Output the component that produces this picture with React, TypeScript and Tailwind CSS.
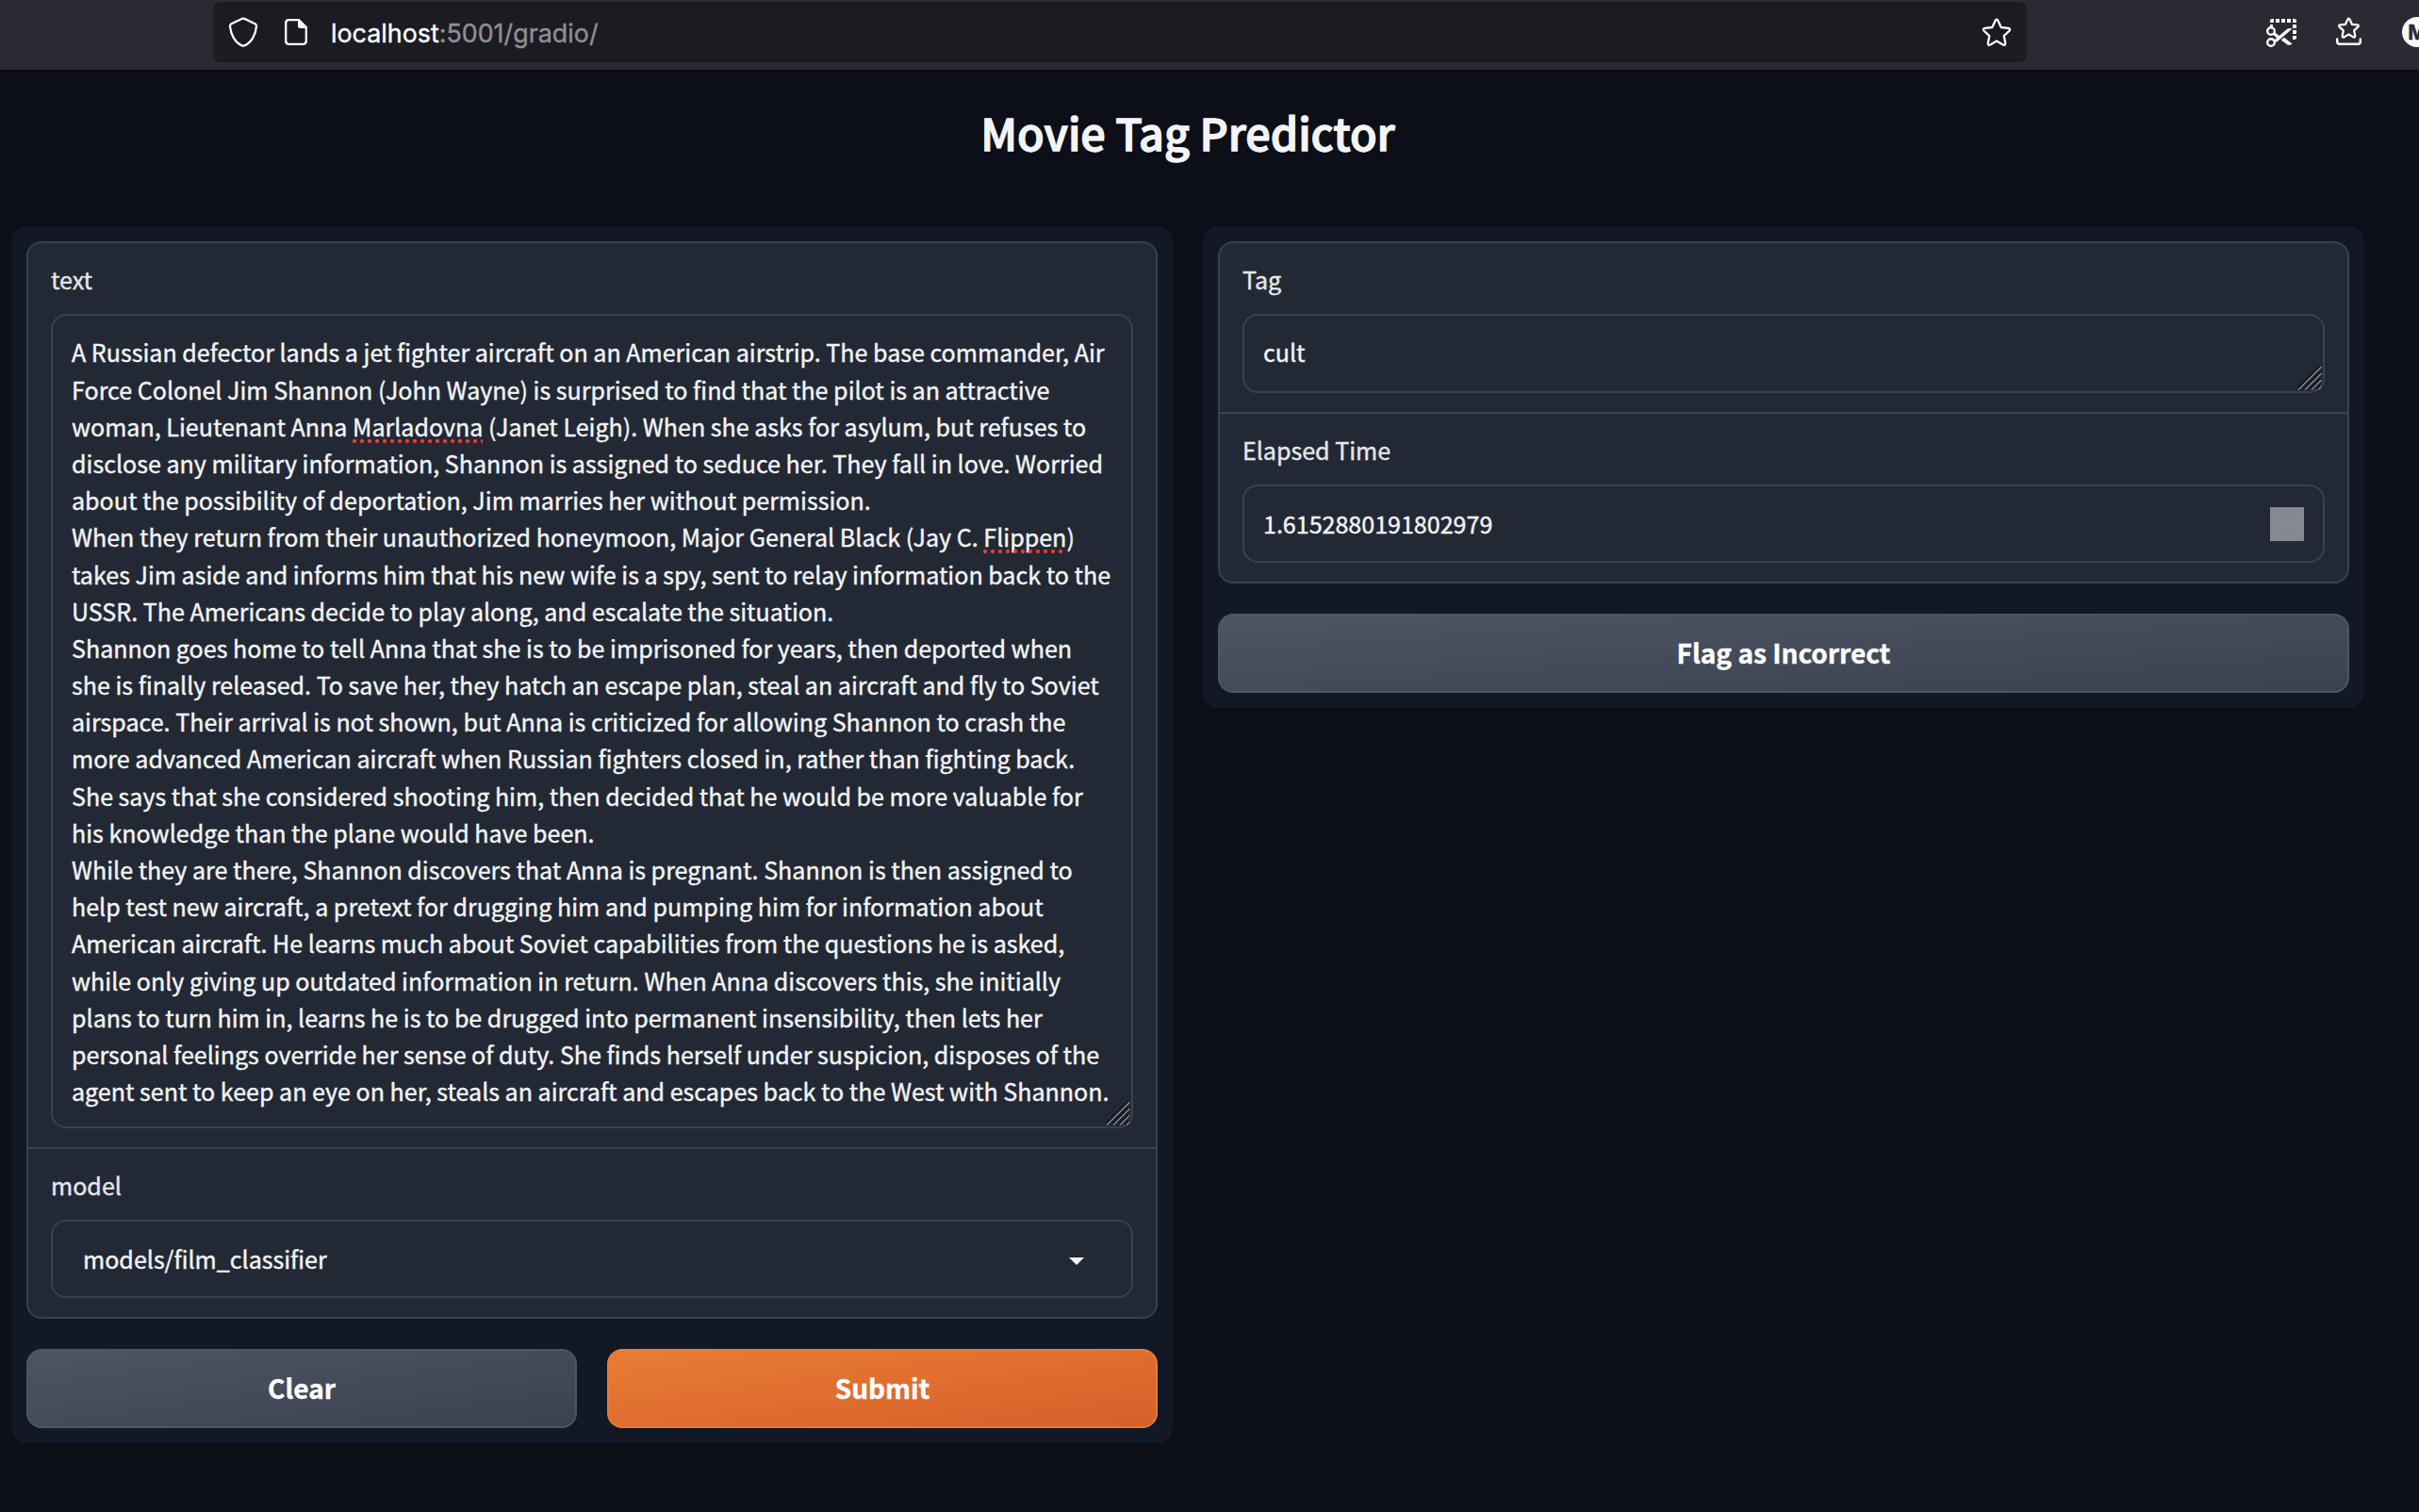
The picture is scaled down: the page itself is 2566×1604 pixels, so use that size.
import React from "react";

const lines: string[] = [
  "A Russian defector lands a jet fighter aircraft on an American airstrip. The base commander, Air",
  "Force Colonel Jim Shannon (John Wayne) is surprised to find that the pilot is an attractive",
  "woman, Lieutenant Anna *Marladovna* (Janet Leigh). When she asks for asylum, but refuses to",
  "disclose any military information, Shannon is assigned to seduce her. They fall in love. Worried",
  "about the possibility of deportation, Jim marries her without permission.",
  "When they return from their unauthorized honeymoon, Major General Black (Jay C. *Flippen*)",
  "takes Jim aside and informs him that his new wife is a spy, sent to relay information back to the",
  "USSR. The Americans decide to play along, and escalate the situation.",
  "Shannon goes home to tell Anna that she is to be imprisoned for years, then deported when",
  "she is finally released. To save her, they hatch an escape plan, steal an aircraft and fly to Soviet",
  "airspace. Their arrival is not shown, but Anna is criticized for allowing Shannon to crash the",
  "more advanced American aircraft when Russian fighters closed in, rather than fighting back.",
  "She says that she considered shooting him, then decided that he would be more valuable for",
  "his knowledge than the plane would have been.",
  "While they are there, Shannon discovers that Anna is pregnant. Shannon is then assigned to",
  "help test new aircraft, a pretext for drugging him and pumping him for information about",
  "American aircraft. He learns much about Soviet capabilities from the questions he is asked,",
  "while only giving up outdated information in return. When Anna discovers this, she initially",
  "plans to turn him in, learns he is to be drugged into permanent insensibility, then lets her",
  "personal feelings override her sense of duty. She finds herself under suspicion, disposes of the",
  "agent sent to keep an eye on her, steals an aircraft and escapes back to the West with Shannon.",
];

const STAR =
  "M14.4 4.2Q16 1.200 17.600 4.200L20.700 11L28.300 11.900Q31.300 12.400 29.300 14.800L23.700 20L25.200 27.500Q25.400 30.600 22.800 29.500L16 25.500L9.200 29.500Q6.600 30.600 6.800 27.500L8.300 20L2.700 14.800Q.7 12.400 3.700 11.900L11.300 11Z";

/* Dotted spell-check underline */
const Squiggle = () => (
  <span className="absolute right-0 bottom-0 left-0 h-1 bg-[radial-gradient(circle_at_2px_2px,#ee3a30_1.9px,transparent_2.3px)] bg-[length:8px_4px]" />
);

const Line = ({ text }: { text: string }) => (
  <div className="h-[39.2px] whitespace-nowrap">
    {text.split("*").map((part, i) =>
      i % 2 ? (
        <span key={i} className="relative">
          {part}
          <Squiggle />
        </span>
      ) : (
        part
      )
    )}
  </div>
);

const ResizeGrip = () => (
  <svg className="absolute right-px bottom-px" width="26" height="26" viewBox="0 0 26 26" fill="none">
    <path d="M0 24.5 24.5 0M7 24.5 24.5 7M14 24.5 24.5 14M21 24.5 24.5 21" stroke="#14181f" strokeWidth="3" />
    <path d="M1 25.5 25.5 1M8 25.5 25.5 8M15 25.5 25.5 15M22 25.5 25.5 22" stroke="#8d9096" strokeWidth="1.2" />
  </svg>
);

function Toolbar() {
  return (
    <header className="flex h-[76px] items-start border-b-2 border-[#0c0c0d] bg-[#2b2a33] pt-0.5 pl-[226px] text-[#fbfbfe]">
      <div className="flex h-16 w-[1924px] shrink-0 items-center rounded-lg bg-[#1c1b22]">
        <svg className="ml-4 shrink-0" width="32" height="32" viewBox="0 0 32 32" fill="none" stroke="currentColor" strokeWidth="2.3" strokeLinejoin="round">
          <path d="M14.6 1.900Q16 1.200 17.400 1.900L28.600 7.300Q30.200 8.200 30 10C29.300 18.500 24.500 27.500 17.200 30.400Q16 30.900 14.800 30.400C7.500 27.500 2.700 18.500 2 10Q1.800 8.200 3.400 7.300Z" />
        </svg>
        <svg className="ml-6 shrink-0" width="32" height="32" viewBox="0 0 32 32" fill="none">
          <path d="M19 3.200H8.500Q5.200 3.200 5.200 6.500V25.500Q5.200 28.800 8.500 28.800H23.500Q26.800 28.800 26.800 25.500V11.500" stroke="currentColor" strokeWidth="2.3" />
          <path d="M18 2H19.500L28 10.500V12H20.500Q18 12 18 9.500Z" fill="currentColor" />
        </svg>
        <span className="ml-[21px] pt-0.5 font-['Inter'] text-[26.85px] leading-none whitespace-nowrap [-webkit-text-stroke:0.4px]">
          localhost<span className="text-[#8f8e94]">:5001/gradio/</span>
        </span>
        <svg className="mr-4 ml-auto shrink-0" width="32" height="32" viewBox="0 0 32 32" fill="none" stroke="currentColor" strokeWidth="2.3" strokeLinejoin="round">
          <path d={STAR} />
        </svg>
      </div>
      <div className="ml-[254px] flex h-16 shrink-0 items-center gap-10">
        <svg className="shrink-0" width="32" height="32" viewBox="0 0 32 32" fill="none">
          <path
            d="M4 6V4Q4 2 6 2H8V6ZM10 2H14V6H10ZM16 2H20V6H16ZM22 2H26V6H22ZM28 2H30Q32 2 32 4V6H28ZM28 8H32V12H28ZM28 14H32V18H28ZM28 20H32V22Q32 24 30 24H28ZM4 8H7V10H4Z"
            fill="currentColor"
          />
          <circle cx="5" cy="15" r="3.800" stroke="currentColor" strokeWidth="2.4" />
          <circle cx="5" cy="27" r="3.800" stroke="currentColor" strokeWidth="2.4" />
          <path d="M8 24.800 22.500 12.600Q24 11.600 27.500 12.400L11.500 26.200 8.800 27Z" fill="currentColor" />
          <path d="M8 17.500 13 21.500" stroke="currentColor" strokeWidth="3.4" />
          <path d="M15.800 24.600 19 21.800 27.500 28.600Q25.500 30.400 22.500 29.600Z" fill="currentColor" />
        </svg>
        <svg className="shrink-0" width="32" height="32" viewBox="0 0 32 32" fill="none" stroke="currentColor" strokeLinejoin="round" strokeLinecap="round">
          <path transform="translate(3.7 -.3) scale(.735)" d={STAR} strokeWidth="3.100" />
          <path d="M3.200 23.500V26Q3.200 28.800 6 28.800H25Q27.800 28.800 27.800 26V23.500" strokeWidth="2.4" />
        </svg>
        <div className="flex size-8 shrink-0 items-center justify-center rounded-full bg-[#fbfbfe] font-['Inter'] text-[21px] leading-none font-bold text-[#2b2a33]">M</div>
      </div>
    </header>
  );
}

const Block = ({ label, children }: { label: string; children: React.ReactNode }) => (
  <div className="px-6 pb-5">
    <div className="h-[75px] pt-[19px] text-[#e5e7eb]">{label}</div>
    {children}
  </div>
);

const Group = ({ children }: { children: React.ReactNode }) => (
  <div className="divide-y-2 divide-[#394150] rounded-2xl border-2 border-[#394150] bg-[#222935]">{children}</div>
);

const Field = ({ className, children }: { className: string; children: React.ReactNode }) => (
  <div className={"relative rounded-2xl border-2 border-[#394150] " + className}>{children}</div>
);

const Button = ({ primary, children }: { primary?: boolean; children: React.ReactNode }) => (
  <button
    className={
      "h-[84px] flex-1 rounded-2xl border-2 text-[28px] font-bold text-white " +
      (primary
        ? "border-[#e87c35] bg-linear-to-br from-[#e87c35] to-[#d75f29]"
        : "border-[#4d5462] bg-linear-to-br from-[#4d5462] to-[#3a4150]")
    }
  >
    {children}
  </button>
);

export default function App() {
  return (
    <div className="h-[1604px] w-[2566px] overflow-hidden bg-[#0c0f18] font-['Noto_Sans_CJK_SC','Noto_Sans',sans-serif] text-[25.06px] leading-[39.2px] text-[#f3f4f6] [-webkit-text-stroke:0.4px]">
      <Toolbar />
      <h1 className="h-[164px] w-[2520px] pt-[30px] text-center text-[46.7px] leading-[68px] font-medium [-webkit-text-stroke:1.3px]">Movie Tag Predictor</h1>
      <main className="flex items-start gap-8 pl-3">
        <section className="flex w-[1232px] flex-col gap-8 rounded-2xl bg-[#121826] p-4">
          <Group>
            <Block label="text">
              <Field className="h-[864px] px-5 pt-[19.4px]">
                {lines.map((t) => (
                  <Line key={t} text={t} />
                ))}
                <ResizeGrip />
              </Field>
            </Block>
            <Block label="model">
              <Field className="flex h-[83px] items-center justify-between pt-px pr-[50px] pl-8">
                <span>models/film_classifier</span>
                <svg className="mt-1" width="16" height="8" viewBox="0 0 16 8" fill="#f3f4f6">
                  <path d="M0 0H16L8 8Z" />
                </svg>
              </Field>
            </Block>
          </Group>
          <div className="flex gap-8">
            <Button>Clear</Button>
            <Button primary>Submit</Button>
          </div>
        </section>
        <section className="flex w-[1232px] flex-col gap-8 rounded-2xl bg-[#121826] p-4">
          <Group>
            <Block label="Tag">
              <Field className="h-[84px] px-5 pt-[19.4px]">
                cult
                <ResizeGrip />
              </Field>
            </Block>
            <Block label="Elapsed Time">
              <Field className="flex h-[83px] items-center justify-between px-5">
                <span>1.6152880191802979</span>
                <svg width="36" height="36" viewBox="0 0 36 36" fill="none">
                  <path d="M0 0H36V36H0Z" fill="#868992" />
                  <path d="M12 13 18 7 24 13M12 23 18 29 24 23" stroke="#828492" strokeWidth="3" />
                </svg>
              </Field>
            </Block>
          </Group>
          <div className="flex">
            <Button>Flag as Incorrect</Button>
          </div>
        </section>
      </main>
    </div>
  );
}
